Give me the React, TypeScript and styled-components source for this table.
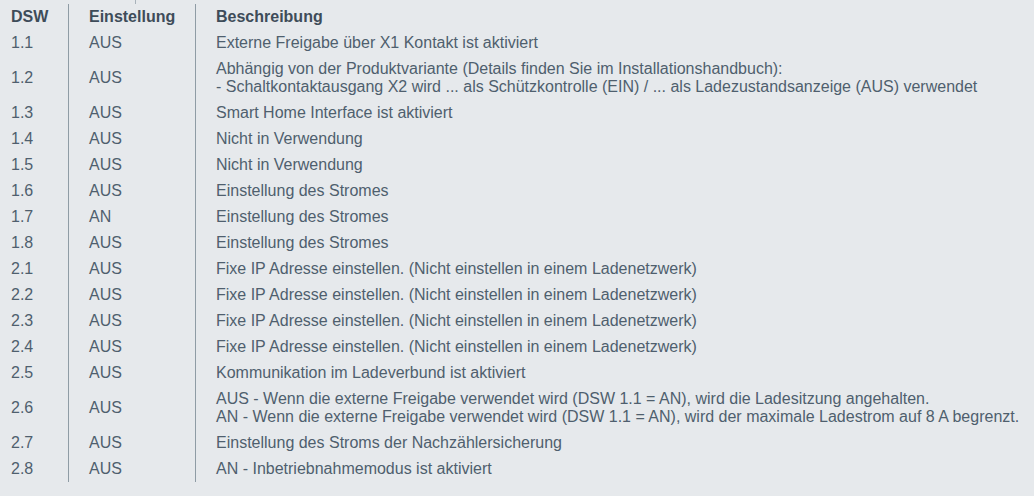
import styled, { createGlobalStyle } from "styled-components";

type Row = { dsw: string; setting: string; lines: string[] };

const ROWS: Row[] = [
  { dsw: "1.1", setting: "AUS", lines: ["Externe Freigabe über X1 Kontakt ist aktiviert"] },
  {
    dsw: "1.2",
    setting: "AUS",
    lines: [
      "Abhängig von der Produktvariante (Details finden Sie im Installationshandbuch):",
      "- Schaltkontaktausgang X2 wird ... als Schützkontrolle (EIN) / ... als Ladezustandsanzeige (AUS) verwendet",
    ],
  },
  { dsw: "1.3", setting: "AUS", lines: ["Smart Home Interface ist aktiviert"] },
  { dsw: "1.4", setting: "AUS", lines: ["Nicht in Verwendung"] },
  { dsw: "1.5", setting: "AUS", lines: ["Nicht in Verwendung"] },
  { dsw: "1.6", setting: "AUS", lines: ["Einstellung des Stromes"] },
  { dsw: "1.7", setting: "AN", lines: ["Einstellung des Stromes"] },
  { dsw: "1.8", setting: "AUS", lines: ["Einstellung des Stromes"] },
  { dsw: "2.1", setting: "AUS", lines: ["Fixe IP Adresse einstellen. (Nicht einstellen in einem Ladenetzwerk)"] },
  { dsw: "2.2", setting: "AUS", lines: ["Fixe IP Adresse einstellen. (Nicht einstellen in einem Ladenetzwerk)"] },
  { dsw: "2.3", setting: "AUS", lines: ["Fixe IP Adresse einstellen. (Nicht einstellen in einem Ladenetzwerk)"] },
  { dsw: "2.4", setting: "AUS", lines: ["Fixe IP Adresse einstellen. (Nicht einstellen in einem Ladenetzwerk)"] },
  { dsw: "2.5", setting: "AUS", lines: ["Kommunikation im Ladeverbund ist aktiviert"] },
  {
    dsw: "2.6",
    setting: "AUS",
    lines: [
      "AUS - Wenn die externe Freigabe verwendet wird (DSW 1.1 = AN), wird die Ladesitzung angehalten.",
      "AN - Wenn die externe Freigabe verwendet wird (DSW 1.1 = AN), wird der maximale Ladestrom auf 8 A begrenzt.",
    ],
  },
  { dsw: "2.7", setting: "AUS", lines: ["Einstellung des Stroms der Nachzählersicherung"] },
  { dsw: "2.8", setting: "AUS", lines: ["AN - Inbetriebnahmemodus ist aktiviert"] },
];

const GlobalStyle = createGlobalStyle`
  html, body {
    margin: 0;
    background: #e6e9ec;
  }
  body {
    font-family: "Liberation Sans", Arial, sans-serif;
    font-size: 16px;
    color: #4f5f6e;
  }
`;

export default function App() {
  return (
    <>
      <GlobalStyle />
      <TopStrip>
        <Tick />
      </TopStrip>
      <Table>
        <TableRow>
          <HeadCell>DSW</HeadCell>
          <HeadCell $divider>Einstellung</HeadCell>
          <HeadCell $divider>Beschreibung</HeadCell>
        </TableRow>
        {ROWS.map((row) => (
          <TableRow key={row.dsw}>
            <Cell>{row.dsw}</Cell>
            <Cell $divider>{row.setting}</Cell>
            <Cell $divider>
              {row.lines.map((line) => (
                <Line key={line}>{line}</Line>
              ))}
            </Cell>
          </TableRow>
        ))}
      </Table>
    </>
  );
}

const TopStrip = styled.div`
  height: 4px;
  padding-left: 135px;
`;

const Tick = styled.div`
  width: 1px;
  height: 4px;
  background: #a8b2ba;
`;

const Table = styled.div`
  display: flex;
  flex-direction: column;
`;

const TableRow = styled.div`
  display: grid;
  grid-template-columns: 68px 127px 1fr;
`;

const Cell = styled.div<{ $divider?: boolean }>`
  display: flex;
  flex-direction: column;
  justify-content: center;
  padding: 4px 0 4px ${(p) => (p.$divider ? "20px" : "11px")};
  line-height: 18px;
  border-left: ${(p) => (p.$divider ? "1px solid #8f9ca5" : "none")};
  white-space: nowrap;
`;

const HeadCell = styled(Cell)`
  font-weight: bold;
  color: #3e4c59;
`;

const Line = styled.span`
  display: block;
`;
